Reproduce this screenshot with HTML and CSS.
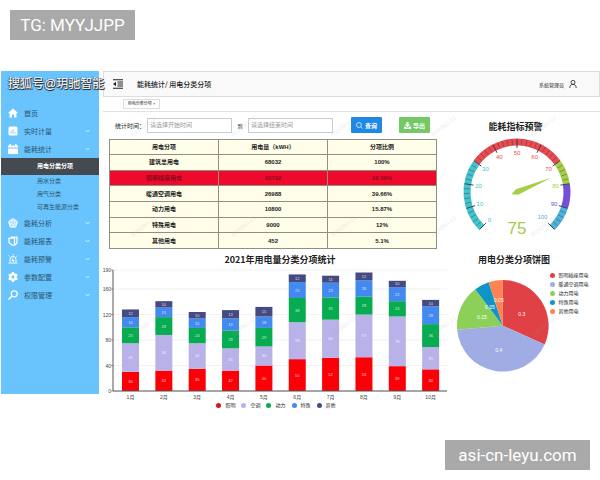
FILE: index.html
```html
<!DOCTYPE html>
<html lang="zh-CN">
<head>
    <meta charset="UTF-8">
    <meta name="viewport" content="width=device-width, initial-scale=1.0">
    <title>能耗统计</title>
    <link rel="stylesheet" href="styles.css">
</head>
<body>
    <div class="badge badge-top">TG: MYYJJPP</div>

    <div class="app">
        <aside class="sidebar">
            <div class="brand">搜狐号@玥驰智能</div>
            <nav class="menu">
                <a href="#" class="item">
                    <svg class="icon" viewBox="0 0 20 20"><path fill="#fff" d="M10 1 0 10h3v9h5v-6h4v6h5v-9h3z"/></svg>
                    <span>首页</span>
                </a>
                <a href="#" class="item">
                    <svg class="icon" viewBox="0 0 20 20"><rect x="1" y="1" width="18" height="18" rx="3" fill="#fff"/><path d="M6 15v-5M10 15V6M14 15v-3" stroke="#8fcdf8" stroke-width="2"/></svg>
                    <span>实时计量</span>
                    <svg class="arrow" viewBox="0 0 10 8"><path d="m1 2 4 4 4-4"/></svg>
                </a>
                <a href="#" class="item">
                    <svg class="icon" viewBox="0 0 20 20"><path fill="#fff" d="M0 3h3V0h3v3h8V0h3v3h3v4H0zM0 9h20v11H0z"/></svg>
                    <span>能耗统计</span>
                    <svg class="arrow" viewBox="0 0 10 8"><path d="m1 2 4 4 4-4"/></svg>
                </a>
                <a href="#" class="sub active">用电分类分项</a>
                <a href="#" class="sub">用水分类</a>
                <a href="#" class="sub">用气分类</a>
                <a href="#" class="sub">可再生能源分类</a>
                <a href="#" class="item">
                    <svg class="icon" viewBox="0 0 20 20"><path fill="#fff" d="m10 0 10 7-4 12H4L0 7z"/><path fill="none" stroke="#6cc4fb" d="m10 4 6 4-2 7H6L4 8zM10 1v9M1 7l9 3 9-3M5 18l5-8 5 8"/></svg>
                    <span>能耗分析</span>
                    <svg class="arrow" viewBox="0 0 10 8"><path d="m1 2 4 4 4-4"/></svg>
                </a>
                <a href="#" class="item">
                    <svg class="icon" viewBox="0 0 20 20"><path fill="none" stroke="#fff" stroke-width="2.5" d="M6 2h12v12l-4 4M2 4h11v14H8l-6-5z"/></svg>
                    <span>能耗报表</span>
                    <svg class="arrow" viewBox="0 0 10 8"><path d="m1 2 4 4 4-4"/></svg>
                </a>
                <a href="#" class="item">
                    <svg class="icon" viewBox="0 0 20 20"><path fill="none" stroke="#fff" stroke-width="2" d="M4 16v-5a6 6 0 0 1 12 0v5M1 18h18M10 0v3M1 3l2 2M19 3l-2 2M10 9l-2 4h4l-2 3"/></svg>
                    <span>能耗预警</span>
                    <svg class="arrow" viewBox="0 0 10 8"><path d="m1 2 4 4 4-4"/></svg>
                </a>
                <a href="#" class="item">
                    <svg class="icon" viewBox="0 0 20 20"><circle cx="10" cy="10" r="5.5" fill="none" stroke="#fff" stroke-width="5"/><path stroke="#fff" stroke-width="4" d="M10 0v4M10 16v4M1.3 5l3.5 2M15.2 13l3.5 2M1.3 15l3.5-2M15.2 7l3.5-2"/></svg>
                    <span>参数配置</span>
                    <svg class="arrow" viewBox="0 0 10 8"><path d="m1 2 4 4 4-4"/></svg>
                </a>
                <a href="#" class="item">
                    <svg class="icon" viewBox="0 0 20 20"><circle cx="12.5" cy="7.5" r="6" fill="none" stroke="#fff" stroke-width="2.5"/><path stroke="#fff" stroke-width="3" d="m8 12-7 7"/></svg>
                    <span>权限管理</span>
                    <svg class="arrow" viewBox="0 0 10 8"><path d="m1 2 4 4 4-4"/></svg>
                </a>
            </nav>
        </aside>

        <main class="main">
            <header class="header">
                <svg class="fold" viewBox="0 0 20 20"><path d="M0 1.5h20M9 6h11M9 10h11M9 14h11M0 18.500h20" stroke="#222" stroke-width="2"/><path d="M6 5.500v9L0 10z" fill="#222"/></svg>
                <h1>能耗统计/ 用电分类分项</h1>
                <span class="user">系统管理员</span>
                <svg class="avatar" viewBox="0 0 20 20"><circle cx="10" cy="6" r="5" fill="none" stroke="#222" stroke-width="2"/><path d="M2 20c0-6 3-9 8-9s8 3 8 9" fill="none" stroke="#222" stroke-width="2"/></svg>
            </header>
            <div class="tabs"><a href="#" class="tab">用电分类分项 ×</a></div>

            <div class="content">
                <section class="left">
                    <form class="filter">
                        <label for="start">统计时间：</label>
                        <input id="start" type="text" placeholder="请选择开始时间">
                        <label for="end" class="to">到</label>
                        <input id="end" type="text" placeholder="请选择结束时间">
                        <button type="button" class="query">
                            <svg viewBox="0 0 20 20"><circle cx="8.500" cy="8.500" r="7" fill="none" stroke="#fff" stroke-width="2"/><path d="m14 14 5 5" stroke="#fff" stroke-width="2"/></svg>查询
                        </button>
                        <button type="button" class="export">
                            <svg viewBox="0 0 20 20"><path fill="#fff" d="M7 0h6v7h5l-8 8-8-8h5zM0 13h4l3 3h6l3-3h4v7H0z"/></svg>导出
                        </button>
                    </form>

                    <table>
                        <thead>
                            <tr><th>用电分项</th><th>用电量（kWH）</th><th>分项比例</th></tr>
                        </thead>
                        <tbody>
                            <tr><td>建筑总用电</td><td>68032</td><td>100%</td></tr>
                            <tr class="warn"><td>照明插座用电</td><td>20792</td><td>30.56%</td></tr>
                            <tr><td>暖通空调用电</td><td>26988</td><td>39.66%</td></tr>
                            <tr><td>动力用电</td><td>10800</td><td>15.87%</td></tr>
                            <tr><td>特殊用电</td><td>9000</td><td>12%</td></tr>
                            <tr><td>其他用电</td><td>452</td><td>5.1%</td></tr>
                        </tbody>
                    </table>

                    <h2 class="bar-title">2021年用电量分类分项统计</h2>
                    <svg id="bars" class="bars" viewBox="0 0 346 132"></svg>
                    <ul class="legend">
                        <li><i class="dot red"></i>照明</li>
                        <li><i class="dot lilac"></i>空调</li>
                        <li><i class="dot green"></i>动力</li>
                        <li><i class="dot blue"></i>特殊</li>
                        <li><i class="dot navy"></i>其他</li>
                    </ul>
                </section>

                <section class="right">
                    <h2 class="gauge-title">能耗指标预警</h2>
                    <svg id="gauge" class="gauge" viewBox="0 0 151 104"></svg>
                    <h2 class="pie-title">用电分类分项饼图</h2>
                    <div class="pie-row">
                        <svg id="pie" class="pie" viewBox="0 0 94 94"></svg>
                        <ul class="pie-legend">
                            <li><i class="dot pie-red"></i>照明插座用电</li>
                            <li><i class="dot pie-lilac"></i>暖通空调用电</li>
                            <li><i class="dot pie-green"></i>动力用电</li>
                            <li><i class="dot pie-blue"></i>特殊用电</li>
                            <li><i class="dot pie-orange"></i>其他用电</li>
                        </ul>
                    </div>
                </section>
            </div>

            <svg class="watermark">
                <defs>
                    <pattern id="mark" width="100" height="100" patternUnits="userSpaceOnUse">
                        <text x="30" y="66" transform="rotate(-38 30 66)">modao.cc</text>
                    </pattern>
                </defs>
                <rect width="100%" height="100%" fill="url(#mark)"/>
            </svg>
        </main>
    </div>

    <div class="badge badge-bottom">asi-cn-leyu.com</div>

    <script>
        const months = [
            [30, 45, 25, 16, 12],
            [32, 56, 28, 15, 10],
            [35, 40, 24, 15, 10],
            [32, 35, 28, 19, 13],
            [40, 30, 29, 18, 15],
            [50, 58, 38, 25, 12],
            [52, 60, 35, 23, 11],
            [53, 67, 28, 26, 12],
            [39, 78, 24, 22, 10],
            [34, 35, 36, 28, 10]
        ];
        const barColors = ["#fb0007", "#b9b2e8", "#07ab50", "#438af0", "#454a80"];

        function drawBars() {
            const base = 122, scale = 0.637;
            let out = "";
            [0, 40, 80, 120, 160, 190].forEach(v => {
                const y = base - v * scale;
                out += `<path d="M11 ${y}H344" stroke="#e8e8e8" stroke-width="0.6"/>`;
                out += `<path d="M8 ${y}h2" stroke="#555" stroke-width="0.6"/>`;
                out += `<text x="8" y="${y + 2}" text-anchor="end">${v}</text>`;
            });
            months.forEach((month, i) => {
                const x = 19 + i * 33.35;
                let y = base;
                month.forEach((value, k) => {
                    const h = value * scale;
                    y -= h;
                    out += `<rect x="${x}" y="${y}" width="17" height="${h}" fill="${barColors[k]}"/>`;
                    out += `<text class="value" x="${x + 8.5}" y="${y + h / 2 + 1.5}">${value}</text>`;
                });
                out += `<text x="${x + 8.5}" y="130" text-anchor="middle">${i + 1}月</text>`;
            });
            out += `<path d="M10 1V${base}H344" fill="none" stroke="#555"/>`;
            document.getElementById("bars").innerHTML = out;
        }

        // angle in degrees, clockwise from the top
        function point(cx, cy, r, angle) {
            const a = (angle - 90) * Math.PI / 180;
            return [cx + r * Math.cos(a), cy + r * Math.sin(a)];
        }

        function drawGauge() {
            const cx = 68, cy = 57;
            const angle = v => v * 2.7 - 135;
            const zones = [[0, 30, "#45c3cd"], [30, 70, "#e94b52"], [70, 80, "#a6cf48"], [80, 90, "#7350d6"], [90, 100, "#4db3dc"]];
            let out = "";
            zones.forEach(([from, to, color]) => {
                const a = point(cx, cy, 50, angle(from)), b = point(cx, cy, 50, angle(to));
                out += `<path d="M${a}A50 50 0 0 1 ${b}" fill="none" stroke="${color}" stroke-width="7"/>`;
            });
            for (let v = 0; v <= 100; v += 2) {
                const major = v % 10 === 0;
                if (!major && v > 80 && v < 90) continue;
                out += `<path d="M${point(cx, cy, 53, angle(v))}L${point(cx, cy, major ? 44 : 47, angle(v))}" stroke="#333" stroke-width="${major ? 0.9 : 0.4}"/>`;
                if (major) {
                    const color = zones.find(z => v <= z[1])[2];
                    const p = point(cx, cy, v === 100 ? 36 : 39, angle(v));
                    out += `<text class="tick" x="${p[0]}" y="${p[1] + 2}" fill="${color}">${v}</text>`;
                }
            }
            const tip = point(cx, cy, 37, angle(75)), back = point(cx, cy, 6, angle(75) + 180);
            const l = point(cx, cy, 3, angle(75) - 90), r = point(cx, cy, 3, angle(75) + 90);
            out += `<path d="M${tip}L${r}L${back}L${l}z" fill="#a6cf48"/>`;
            out += `<text class="reading" x="${cx}" y="99">75</text>`;
            document.getElementById("gauge").innerHTML = out;
        }

        function drawPie() {
            const slices = [
                [0, 114, "#df4145", "0.3", 66, 37],
                [114, 265, "#a0ace4", "0.4", 43, 73],
                [265, 323, "#8cd05a", "0.15", 26, 40],
                [323, 342, "#0f94c8", "0.05", 34, 30],
                [342, 360, "#fd8452", "0.05", 43, 23]
            ];
            let out = "";
            slices.forEach(([from, to, color]) => {
                out += `<path d="M47 47L${point(47, 47, 46, from)}A46 46 0 0 1 ${point(47, 47, 46, to)}z" fill="${color}"/>`;
            });
            slices.forEach(s => {
                out += `<text class="share" x="${s[4]}" y="${s[5]}">${s[3]}</text>`;
            });
            document.getElementById("pie").innerHTML = out;
        }

        drawBars();
        drawGauge();
        drawPie();
    </script>
</body>
</html>
```
FILE: styles.css
```css
* {
    box-sizing: border-box;
}
body {
    margin: 0;
    padding-top: 71px;
    background: #fff;
    font-family: "Liberation Sans", "Noto Sans CJK SC", sans-serif;
    color: #222;
}
h1, h2, ul {
    margin: 0;
    padding: 0;
}
a {
    color: inherit;
    text-decoration: none;
}
svg {
    display: block;
}
.badge {
    position: absolute;
    height: 30px;
    background: #a9a9a9;
    color: #fff;
    font-family: Roboto, sans-serif;
    font-size: 17px;
    line-height: 30px;
    text-align: center;
    white-space: nowrap;
}
.badge-top {
    top: 10px;
    left: 10px;
    width: 125px;
}
.badge-bottom {
    right: 10px;
    bottom: 10px;
    width: 145px;
}
.app {
    display: flex;
    align-items: flex-start;
    padding-left: 1px;
}
.sidebar {
    flex: none;
    width: 98px;
    padding-bottom: 90px;
    background: #69c3fc;
}
.brand {
    position: relative;
    z-index: 1;
    height: 33px;
    padding-left: 7px;
    color: #fff;
    font-size: 12px;
    line-height: 26px;
    white-space: nowrap;
    text-shadow: 1px 1px 0 #333, 0 1px 1px #333, -1px 0 1px #567;
}
.menu {
    display: flex;
    flex-direction: column;
}
.item {
    display: flex;
    align-items: center;
    height: 18px;
    padding: 0 9px 0 7px;
    color: #2c5470;
    font-size: 7px;
}
.icon {
    width: 10px;
    height: 10px;
    margin-right: 6px;
}
.arrow {
    width: 5px;
    height: 4px;
    margin-left: auto;
    fill: none;
    stroke: #d8f0ff;
    stroke-width: 2;
}
.sub {
    height: 13px;
    padding-left: 36px;
    color: #2c5470;
    font-size: 6px;
    line-height: 13px;
    white-space: nowrap;
}
.active {
    height: 17px;
    background: #454a50;
    color: #fff;
    font-weight: bold;
    line-height: 17px;
}
.main {
    position: relative;
    flex: 1;
    min-width: 0;
    margin-left: 4px;
}
.header {
    display: flex;
    align-items: center;
    height: 26px;
    padding: 0 22px 0 9px;
    border: 1px solid #ddd;
    background: #f9f9f9;
}
.fold {
    width: 10px;
    height: 10px;
    margin-right: 14px;
}
h1, h2 {
    font-family: "Noto Sans CJK SC", sans-serif;
}
h1 {
    font-size: 7px;
    font-weight: 500;
}
.user {
    margin-left: auto;
    font-size: 5px;
}
.avatar {
    width: 8px;
    height: 8px;
    margin-left: 5px;
}
.tabs {
    height: 15px;
    padding: 2px 0 0 20px;
    border-bottom: 1px solid #e2e2e2;
}
.tab {
    display: block;
    width: 37px;
    height: 10px;
    border: 1px solid #ddd;
    font-size: 4px;
    line-height: 8px;
    text-align: center;
    white-space: nowrap;
}
.content {
    display: grid;
    grid-template-columns: minmax(0, 346fr) minmax(0, 151fr);
}
.filter {
    display: flex;
    align-items: center;
    padding: 5px 0 0 12px;
    font-size: 6px;
}
.filter label {
    width: 32px;
    white-space: nowrap;
}
.filter .to {
    width: 16px;
    font-size: 5px;
    text-align: center;
}
.filter input {
    width: 85px;
    height: 15px;
    padding: 0 2px;
    border: 1px solid #ccc;
    font-family: inherit;
    font-size: 6px;
}
.filter input::placeholder {
    color: #999;
}
.filter button {
    display: flex;
    align-items: center;
    justify-content: center;
    gap: 2px;
    width: 31px;
    height: 16px;
    padding: 0;
    border: none;
    border-radius: 1px;
    color: #fff;
    font-family: inherit;
    font-size: 6px;
    font-weight: bold;
}
.filter button svg {
    width: 7px;
    height: 7px;
}
.query {
    margin-left: 18px;
    background: #1f88e5;
}
.export {
    margin-left: 17px;
    background: #74c965;
}
table {
    width: calc(100% - 18px);
    height: 110px;
    margin: 6px 0 0 6px;
    border-collapse: collapse;
    table-layout: fixed;
    background: #fffee9;
    font-size: 6px;
    font-weight: bold;
    line-height: 8px;
    text-align: center;
}
th, td {
    height: 15px;
    padding: 0;
    border: 1px solid #908f86;
}
.warn {
    background: #ef0a2c;
    color: #8a0a1c;
}
h2 {
    font-size: 9px;
    line-height: 12px;
    text-align: center;
}
.bar-title {
    margin: 5px 0 3px;
    padding-left: 8px;
}
.bars {
    width: 100%;
    overflow: visible;
}
.bars text {
    fill: #444;
    font-size: 5px;
}
.bars .value {
    fill: #fff;
    fill-opacity: 0.8;
    font-size: 4px;
    text-anchor: middle;
}
.legend {
    display: flex;
    justify-content: center;
    gap: 6px;
    font-size: 5px;
    line-height: 8px;
    list-style: none;
}
.legend li, .pie-legend li {
    display: flex;
    align-items: center;
    white-space: nowrap;
}
.dot {
    width: 5px;
    height: 5px;
    margin-right: 4px;
    border-radius: 50%;
}
.red { background: #d9161c; }
.lilac { background: #b9b2e8; }
.green { background: #07ab50; }
.blue { background: #438af0; }
.navy { background: #454a80; }
.pie-red { background: #df4145; }
.pie-lilac { background: #a0ace4; }
.pie-green { background: #8cd05a; }
.pie-blue { background: #0f94c8; }
.pie-orange { background: #fd8452; }
.gauge-title {
    margin: 9px 0 2px;
    padding-right: 18px;
}
.gauge {
    width: 100%;
}
.tick {
    font-size: 6px;
    text-anchor: middle;
}
.reading {
    fill: #a9c94a;
    font-size: 17px;
    text-anchor: middle;
}
.pie-title {
    margin-top: 15px;
    padding-right: 21px;
}
.pie-row {
    display: flex;
    align-items: flex-start;
    padding: 5px 0 0 7px;
}
.pie {
    flex: none;
    width: 65%;
    margin-top: 8px;
}
.share {
    fill: #fff;
    font-size: 5px;
    text-anchor: middle;
}
.pie-legend {
    font-size: 5px;
    line-height: 9px;
    list-style: none;
}
.watermark {
    position: absolute;
    inset: 0;
    width: 100%;
    height: 100%;
    pointer-events: none;
}
.watermark text {
    fill: #999;
    fill-opacity: 0.2;
    font-size: 7px;
}
```
